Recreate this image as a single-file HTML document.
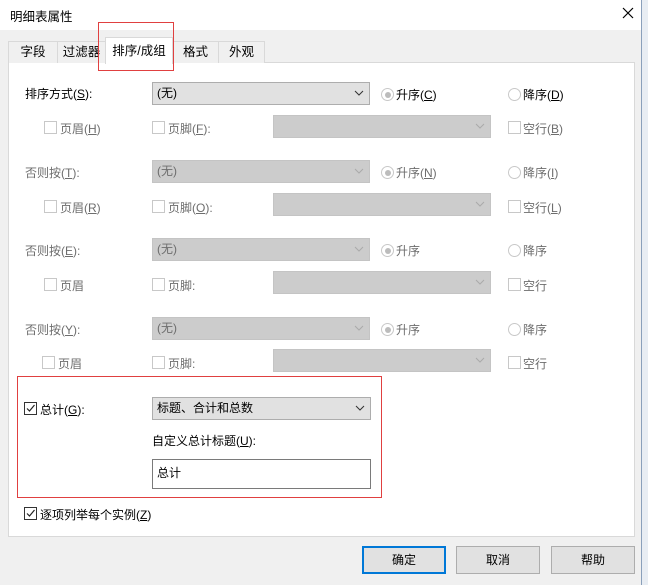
<!DOCTYPE html><html><head><meta charset="utf-8"><style>
*{box-sizing:border-box;margin:0;padding:0}
body{width:648px;height:585px;overflow:hidden;background:#f0f0f0;font:12px "Liberation Sans","Noto Sans CJK SC",sans-serif;color:#000;position:relative}
.a{position:absolute;white-space:nowrap}
.title{left:0;top:0;width:641px;height:30px;background:#fff}
.tab{position:absolute;top:41px;height:22px;border:1px solid #d9d9d9;border-bottom:none;background:#f0f0f0;text-align:center;line-height:20px;font-size:12.5px}
.panel{left:8px;top:62px;width:627px;height:475px;background:#fff;border:1px solid #d9d9d9}
.dis{color:#6d6d6d}
.cb{position:absolute;width:13px;height:13px;border:1px solid #c8c8c8;background:#fff}
.cbk{border-color:#333}
.rd{position:absolute;width:13px;height:13px;border:1px solid #c8c8c8;border-radius:50%;background:#fff}
.rd.on::after{content:"";position:absolute;left:2.5px;top:2.5px;width:6px;height:6px;border-radius:50%;background:#bcbcbc}
.combo{position:absolute;height:23px;background:#e1e1e1;border:1px solid #adadad;padding-left:4px;line-height:21px}
.combo.d{background:#cccccc;border-color:#c4c4c4;color:#6d6d6d}
.combo svg{position:absolute;right:5px;top:7px}
.btn{position:absolute;top:546px;width:84px;height:28px;background:#e1e1e1;border:1px solid #adadad;text-align:center;line-height:26px}
u{text-decoration:underline}
</style></head><body>
<div class="a title"></div>
<div class="a" style="left:10px;top:6px;font-size:12.5px">明细表属性</div>
<svg class="a" style="left:622px;top:7px" width="12" height="12"><path d="M1 1L11 11M11 1L1 11" stroke="#000" stroke-width="1.2"/></svg>
<div class="a" style="left:641px;top:0;width:7px;height:585px;background:#e8edf3;border-left:1px solid #8aa0bb"></div>
<div class="a panel"></div>
<div class="tab" style="left:8px;width:50px">字段</div>
<div class="tab" style="left:57px;width:49px">过滤器</div>
<div class="tab" style="left:172px;width:47px">格式</div>
<div class="tab" style="left:218px;width:47px">外观</div>
<div class="tab" style="left:105px;top:37px;width:68px;height:27px;background:#fff;line-height:26px">排序/成组</div>
<div class="a" style="left:98px;top:22px;width:76px;height:49px;border:1px solid #e04040"></div>

<!-- section 1 -->
<div class="a" style="left:25px;top:85px">排序方式(<u>S</u>):</div>
<div class="combo" style="left:152px;top:82px;width:218px">(无)<svg width="10" height="6"><path d="M1 1L5 5L9 1" stroke="#333" fill="none"/></svg></div>
<div class="rd on" style="left:381px;top:88px"></div><div class="a" style="left:396px;top:86px">升序(<u>C</u>)</div>
<div class="rd" style="left:508px;top:88px"></div><div class="a" style="left:523px;top:86px">降序(<u>D</u>)</div>
<div class="cb" style="left:44px;top:121px"></div><div class="a dis" style="left:60px;top:120px">页眉(<u>H</u>)</div>
<div class="cb" style="left:152px;top:121px"></div><div class="a dis" style="left:168px;top:120px">页脚(<u>F</u>):</div>
<div class="combo d" style="left:273px;top:115px;width:218px"><svg width="10" height="6"><path d="M1 1L5 5L9 1" stroke="#aaa" fill="none"/></svg></div>
<div class="cb" style="left:508px;top:121px"></div><div class="a dis" style="left:523px;top:120px">空行(<u>B</u>)</div>

<!-- section 2 -->
<div class="a dis" style="left:25px;top:164px">否则按(<u>T</u>):</div>
<div class="combo d" style="left:152px;top:160px;width:218px">(无)<svg width="10" height="6"><path d="M1 1L5 5L9 1" stroke="#aaa" fill="none"/></svg></div>
<div class="rd on" style="left:381px;top:166px"></div><div class="a dis" style="left:396px;top:164px">升序(<u>N</u>)</div>
<div class="rd" style="left:508px;top:166px"></div><div class="a dis" style="left:523px;top:164px">降序(<u>I</u>)</div>
<div class="cb" style="left:44px;top:200px"></div><div class="a dis" style="left:60px;top:199px">页眉(<u>R</u>)</div>
<div class="cb" style="left:152px;top:200px"></div><div class="a dis" style="left:168px;top:199px">页脚(<u>O</u>):</div>
<div class="combo d" style="left:273px;top:193px;width:218px"><svg width="10" height="6"><path d="M1 1L5 5L9 1" stroke="#aaa" fill="none"/></svg></div>
<div class="cb" style="left:508px;top:200px"></div><div class="a dis" style="left:523px;top:199px">空行(<u>L</u>)</div>

<!-- section 3 -->
<div class="a dis" style="left:25px;top:242px">否则按(<u>E</u>):</div>
<div class="combo d" style="left:152px;top:238px;width:218px">(无)<svg width="10" height="6"><path d="M1 1L5 5L9 1" stroke="#aaa" fill="none"/></svg></div>
<div class="rd on" style="left:381px;top:244px"></div><div class="a dis" style="left:396px;top:242px">升序</div>
<div class="rd" style="left:508px;top:244px"></div><div class="a dis" style="left:523px;top:242px">降序</div>
<div class="cb" style="left:44px;top:278px"></div><div class="a dis" style="left:60px;top:277px">页眉</div>
<div class="cb" style="left:152px;top:278px"></div><div class="a dis" style="left:168px;top:277px">页脚:</div>
<div class="combo d" style="left:273px;top:271px;width:218px"><svg width="10" height="6"><path d="M1 1L5 5L9 1" stroke="#aaa" fill="none"/></svg></div>
<div class="cb" style="left:508px;top:278px"></div><div class="a dis" style="left:523px;top:277px">空行</div>

<!-- section 4 -->
<div class="a dis" style="left:25px;top:321px">否则按(<u>Y</u>):</div>
<div class="combo d" style="left:152px;top:317px;width:218px">(无)<svg width="10" height="6"><path d="M1 1L5 5L9 1" stroke="#aaa" fill="none"/></svg></div>
<div class="rd on" style="left:381px;top:323px"></div><div class="a dis" style="left:396px;top:321px">升序</div>
<div class="rd" style="left:508px;top:323px"></div><div class="a dis" style="left:523px;top:321px">降序</div>
<div class="cb" style="left:42px;top:356px"></div><div class="a dis" style="left:58px;top:355px">页眉</div>
<div class="cb" style="left:152px;top:356px"></div><div class="a dis" style="left:168px;top:355px">页脚:</div>
<div class="combo d" style="left:273px;top:349px;width:218px"><svg width="10" height="6"><path d="M1 1L5 5L9 1" stroke="#aaa" fill="none"/></svg></div>
<div class="cb" style="left:508px;top:356px"></div><div class="a dis" style="left:523px;top:355px">空行</div>

<!-- total -->
<div class="a" style="left:17px;top:376px;width:365px;height:122px;border:1px solid #e04040"></div>
<div class="cb cbk" style="left:24px;top:402px"><svg width="11" height="11" style="position:absolute;left:0;top:0"><path d="M2 5.5L4.5 8L9.5 2" stroke="#222" stroke-width="1.2" fill="none"/></svg></div>
<div class="a" style="left:40px;top:401px">总计(<u>G</u>):</div>
<div class="combo" style="left:152px;top:397px;width:219px">标题、合计和总数<svg width="10" height="6"><path d="M1 1L5 5L9 1" stroke="#333" fill="none"/></svg></div>
<div class="a" style="left:152px;top:432px">自定义总计标题(<u>U</u>):</div>
<div class="a" style="left:152px;top:459px;width:219px;height:30px;background:#fff;border:1px solid #7a7a7a;padding:4px 0 0 4px">总计</div>
<div class="cb cbk" style="left:24px;top:507px"><svg width="11" height="11" style="position:absolute;left:0;top:0"><path d="M2 5.5L4.5 8L9.5 2" stroke="#222" stroke-width="1.2" fill="none"/></svg></div>
<div class="a" style="left:40px;top:506px">逐项列举每个实例(<u>Z</u>)</div>

<div class="btn" style="left:362px;border:2px solid #0078d7;line-height:24px">确定</div>
<div class="btn" style="left:456px">取消</div>
<div class="btn" style="left:551px">帮助</div>
</body></html>
